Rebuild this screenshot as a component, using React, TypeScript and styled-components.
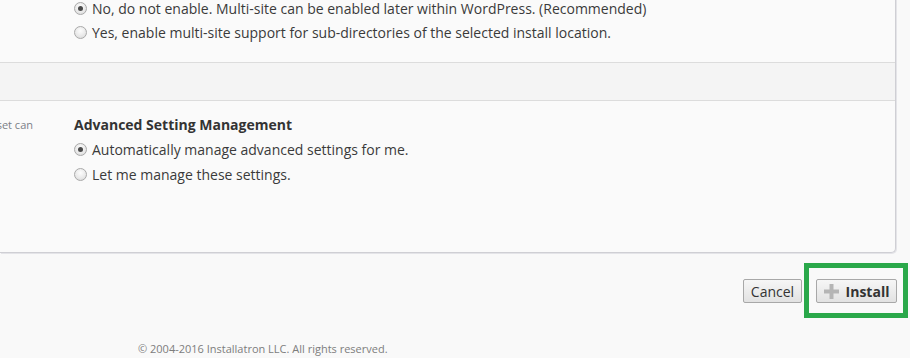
import styled, { createGlobalStyle } from "styled-components"

const GlobalStyle = createGlobalStyle`
  html, body {
    margin: 0;
    padding: 0;
    background: #f9f9f9;
    font-family: "Open Sans", "Liberation Sans", sans-serif;
    color: #333;
    overflow: hidden;
  }
`

const Page = styled.div`
  width: 910px;
  height: 358px;
  overflow: hidden;
`

const Panel = styled.div`
  margin: -4px 14px 0 0;
  background: #fafafa;
  border: 1px solid #cfcfd4;
  border-top: none;
  border-left: none;
  border-bottom-right-radius: 5px;
  box-shadow: 1px 1px 0 #e4e4e8;
`

const Section = styled.div<{ $top: number; $bottom: number }>`
  display: grid;
  grid-template-columns: 74px 1fr;
  padding: ${p => p.$top}px 0 ${p => p.$bottom}px;
`

const Band = styled.div`
  height: 37px;
  background: #f4f4f4;
  border-top: 1px solid #dcdcdc;
  border-bottom: 1px solid #dcdcdc;
`

const Hint = styled.div`
  font-size: 11px;
  line-height: 24px;
  color: #7a7f88;
  white-space: nowrap;
  overflow: hidden;
  direction: rtl;
  text-align: left;
  width: 33px;
`

const Field = styled.div`
  display: flex;
  flex-direction: column;
`

const Title = styled.div`
  font-size: 14px;
  font-weight: 700;
  line-height: 24px;
  color: #333;
`

const Option = styled.label<{ $tall?: boolean }>`
  display: flex;
  align-items: center;
  gap: 5px;
  height: ${p => (p.$tall ? 25 : 24)}px;
  font-size: 14px;
  color: #3a3a3a;
  white-space: nowrap;
`

const Radio = styled.span<{ $checked?: boolean }>`
  box-sizing: border-box;
  width: 13px;
  height: 13px;
  border-radius: 50%;
  border: 1px solid #a9a9a9;
  background: radial-gradient(circle at 50% 35%, #fdfdfd 0%, #e8e8e8 60%, #d4d4d4 100%);
  display: flex;
  align-items: center;
  justify-content: center;
  flex-shrink: 0;

  &::after {
    content: "";
    display: ${p => (p.$checked ? "block" : "none")};
    width: 5px;
    height: 5px;
    border-radius: 50%;
    background: #4a4a4a;
  }
`

const Actions = styled.div`
  display: flex;
  justify-content: flex-end;
  align-items: flex-start;
  margin-top: 10px;
  padding-right: 2px;
`

const Button = styled.button<{ $primary?: boolean }>`
  box-sizing: border-box;
  width: ${p => (p.$primary ? 81 : 59)}px;
  height: 24px;
  margin-top: 16px;
  margin-right: 2px;
  padding: 0;
  display: flex;
  align-items: center;
  justify-content: center;
  gap: 7px;
  font-family: "Open Sans", "Liberation Sans", sans-serif;
  font-size: 14px;
  font-weight: ${p => (p.$primary ? 700 : 400)};
  color: #333;
  background: linear-gradient(#f6f6f6, #e2e2e2);
  border: 1px solid #a8a8a8;
  border-radius: 2px;
  cursor: pointer;
`

const Highlight = styled.div`
  border: 5px solid #2aa84a;
  padding: 11px 6px 10px 7px;

  ${Button} {
    margin: 0;
  }
`

const Footer = styled.div`
  margin-top: 23px;
  padding-left: 138px;
  font-size: 11px;
  line-height: 16px;
  color: #7d7d7d;
`

const PlusIcon = () => (
  <svg width="15" height="15" viewBox="0 0 15 15">
    <rect x="5.5" y="0" width="4" height="15" fill="#b5b5b5" />
    <rect x="0" y="5.5" width="15" height="4" fill="#b5b5b5" />
  </svg>
)

export default function App() {
  return (
    <Page>
      <GlobalStyle />
      <Panel>
        <Section $top={0} $bottom={18}>
          <div />
          <Field>
            <Option><Radio $checked />No, do not enable. Multi-site can be enabled later within WordPress. (Recommended)</Option>
            <Option><Radio />Yes, enable multi-site support for sub-directories of the selected install location.</Option>
          </Field>
        </Section>
        <Band />
        <Section $top={12} $bottom={65}>
          <Hint>Settings that are not preset can</Hint>
          <Field>
            <Title>Advanced Setting Management</Title>
            <Option $tall><Radio $checked />Automatically manage advanced settings for me.</Option>
            <Option $tall><Radio />Let me manage these settings.</Option>
          </Field>
        </Section>
      </Panel>
      <Actions>
        <Button>Cancel</Button>
        <Highlight>
          <Button $primary><PlusIcon />Install</Button>
        </Highlight>
      </Actions>
      <Footer>© 2004-2016 Installatron LLC. All rights reserved.</Footer>
    </Page>
  )
}
